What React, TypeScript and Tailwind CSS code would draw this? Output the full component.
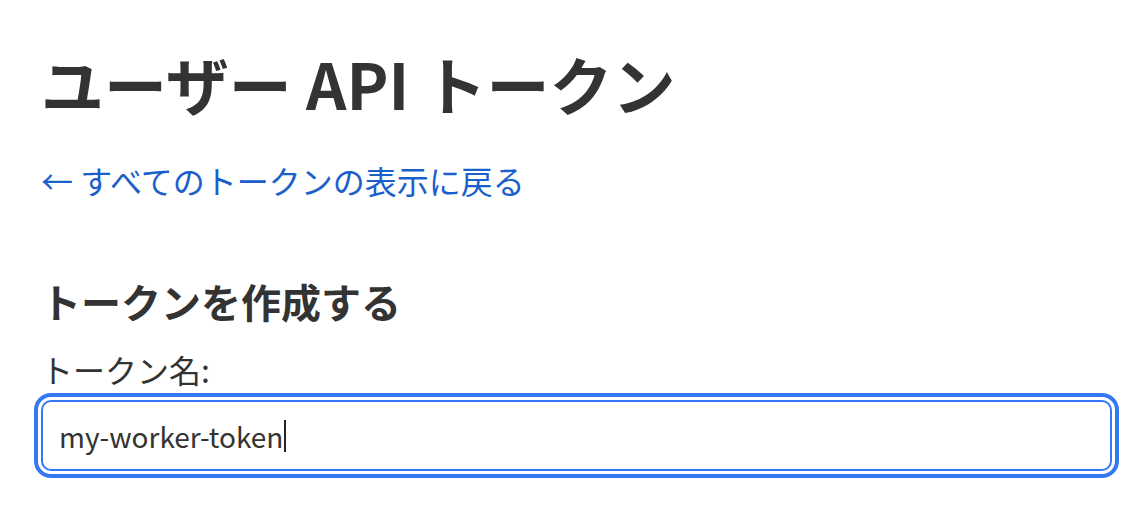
export default function App() {
  return (
    <div
      className="min-h-[510px] bg-white pl-[41px] pr-[36px] text-[#333333]"
      style={{ fontFamily: '"Noto Sans CJK JP", "Noto Sans", sans-serif' }}
    >
      <h1 className="pt-[51px] text-[63px] font-bold leading-none">
        ユーザー API トークン
      </h1>

      <a
        href="#"
        className="mt-[50px] block text-[32px] leading-none text-[#1b5fcb]"
      >
        ← すべてのトークンの表示に戻る
      </a>

      <h3 className="mt-[85px] text-[40px] font-bold leading-none">
        トークンを作成する
      </h3>

      <label className="mt-[32px] block text-[32px] leading-none">
        トークン名:
      </label>

      <div className="mt-[15px] flex h-[71px] w-[1071px] items-center rounded-[10px] border-2 border-[#3478f6] px-[16px] outline-[4px] outline-offset-[3px] outline-[#3478f6] outline-solid">
        <span className="text-[28px] leading-none text-[#333333]">
          my-worker-token
        </span>
        <span className="ml-[1px] h-[32px] w-[2px] bg-[#222222]" />
      </div>
    </div>
  );
}
